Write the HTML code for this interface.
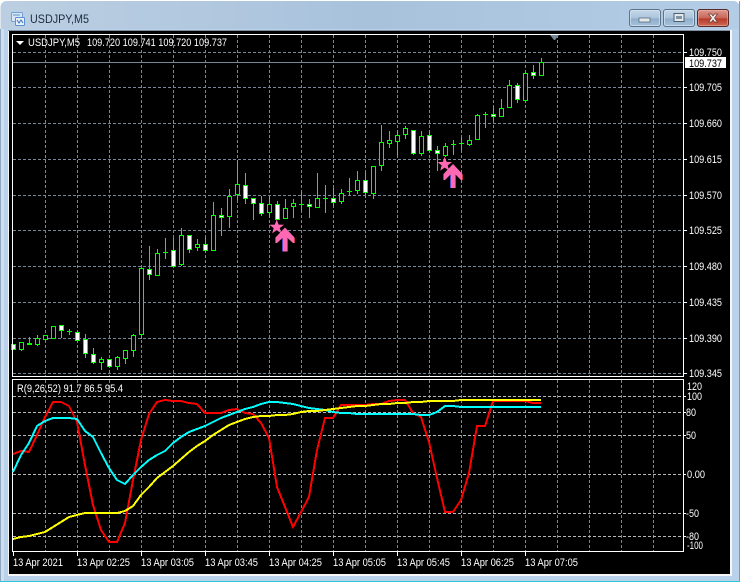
<!DOCTYPE html>
<html><head><meta charset="utf-8"><title>USDJPY,M5</title>
<style>
html,body{margin:0;padding:0;background:#fff;width:741px;height:582px;overflow:hidden}
svg{display:block;position:absolute;left:0;top:0}
text{font-family:"Liberation Sans",sans-serif;font-size:11px;fill:#fff}
</style></head><body>
<svg width="741" height="582" viewBox="0 0 741 582" xmlns="http://www.w3.org/2000/svg">
<defs>
<linearGradient id="tb" x1="0" y1="0" x2="1" y2="0"><stop offset="0" stop-color="#bccfe2"/><stop offset=".5" stop-color="#a8c2dc"/><stop offset="1" stop-color="#b4cde6"/></linearGradient>
<linearGradient id="b1" x1="0" y1="0" x2="0" y2="1"><stop offset="0" stop-color="#c6d8e9"/><stop offset=".5" stop-color="#abc4dc"/><stop offset=".55" stop-color="#8fadca"/><stop offset="1" stop-color="#a8c4de"/></linearGradient>
<linearGradient id="b2" x1="0" y1="0" x2="0" y2="1"><stop offset="0" stop-color="#dd9a8f"/><stop offset=".5" stop-color="#c9675a"/><stop offset=".55" stop-color="#b83a2a"/><stop offset="1" stop-color="#cf6c58"/></linearGradient>
</defs>
<!-- window frame -->
<rect x="0.5" y="1" width="739" height="581" rx="6" fill="url(#tb)"/>
<rect x="0" y="29" width="740" height="553" fill="#b9d1ea"/>
<rect x="0" y="581" width="740" height="1" fill="#2fc6dc"/>
<rect x="0" y="29" width="1" height="552" fill="#8ea6be"/>
<rect x="739" y="1" width="1" height="580" fill="#7f98b0"/>
<rect x="1" y="29" width="3" height="552" fill="#cfdfef"/>
<!-- client -->
<rect x="8" y="30" width="724" height="546" fill="#f4f6f8"/>
<rect x="8" y="30" width="722" height="1" fill="#7f8fa0"/>
<rect x="9" y="31" width="721" height="543" fill="#000"/>
<!-- title -->
<g>
<rect x="11.5" y="12.5" width="11" height="9" rx="1" fill="#d8e6f5" stroke="#6fa0d8"/>
<rect x="15.5" y="17.5" width="9" height="8" rx="1" fill="#e8f0fa" stroke="#5a90d0"/>
<path d="M13 15h7" stroke="#5a90d0" fill="none"/>
<path d="M17 20l2 3 2-3 2 3" stroke="#3a70b8" fill="none"/>
</g>
<text x="30" y="23" style="font-size:12px;fill:#1b2b3b" textLength="59" lengthAdjust="spacingAndGlyphs">USDJPY,M5</text>
<!-- buttons -->
<rect x="629.5" y="9.5" width="31" height="17" rx="2.5" fill="url(#b1)" stroke="#5d7389"/>
<rect x="630.5" y="10.5" width="29" height="15" rx="2" fill="none" stroke="#d7e4f0" stroke-opacity=".7"/>
<rect x="639" y="18" width="11" height="4" fill="#e6e9ec" stroke="#5a6a7a" stroke-width=".8"/>
<rect x="663.5" y="9.5" width="31" height="17" rx="2.5" fill="url(#b1)" stroke="#5d7389"/>
<rect x="664.5" y="10.5" width="29" height="15" rx="2" fill="none" stroke="#d7e4f0" stroke-opacity=".7"/>
<rect x="674" y="13.5" width="10" height="8" fill="#e6e9ec" stroke="#4f5f6f"/>
<rect x="676" y="16" width="6" height="3" fill="#7f93a8"/>
<rect x="697.5" y="9.5" width="31" height="17" rx="2.5" fill="url(#b2)" stroke="#5a2a2a"/>
<rect x="698.5" y="10.5" width="29" height="15" rx="2" fill="none" stroke="#eebbb0" stroke-opacity=".5"/>
<path d="M708.5 14l3 0 1.5 2 1.5-2 3 0-3 4 3 4-3 0-1.5-2-1.5 2-3 0 3-4z" fill="#f2f0ee" stroke="#6a3a36" stroke-width=".7"/>

<!-- main grid -->
<g stroke="#778899" stroke-dasharray="3 2" fill="none" shape-rendering="crispEdges">
<path d="M13 52.5H683M13 87.5H683M13 123.5H683M13 159.5H683M13 195.5H683M13 230.5H683M13 266.5H683M13 302.5H683M13 338.5H683M13 373.5H683"/>
<path d="M45.5 35V552M77.5 35V552M109.5 35V552M141.5 35V552M173.5 35V552M205.5 35V552M237.5 35V552M269.5 35V552M301.5 35V552M333.5 35V552M365.5 35V552M397.5 35V552M429.5 35V552M461.5 35V552M493.5 35V552M525.5 35V552M557.5 35V552M589.5 35V552M621.5 35V552M653.5 35V552"/>
</g>
<path d="M13 62.5H684" stroke="#778899" fill="none" shape-rendering="crispEdges"/>
<!-- sub grid -->
<g stroke="#b4b8bc" stroke-dasharray="3 2" fill="none" shape-rendering="crispEdges">
<path d="M13 396.5H683M13 412.5H683M13 435.5H683M13 474.5H683M13 513.5H683M13 536.5H683"/>
</g>
<!-- candles -->
<g fill="none" stroke="#00ff00" shape-rendering="crispEdges">
<path d="M21.5 342V351M29.5 337V344M37.5 335V346M53.5 326V339M61.5 326V338M69.5 329V335M77.5 331V341M85.5 334V358M93.5 348V364M101.5 357V370M109.5 359V368M117.5 356V370M125.5 350V364M133.5 334V357M141.5 268V339M149.5 246V280M157.5 249V275M165.5 238V259M173.5 238V266M181.5 228V266M189.5 235V253M197.5 239V251M205.5 237V253M213.5 202V251M221.5 208V236M229.5 189V228M237.5 160V200M245.5 173V204M253.5 198V220M261.5 196V216M269.5 196V217M277.5 201V220M285.5 199V219M293.5 199V218M301.5 192V211M309.5 199V218M317.5 173V208M325.5 185V213M333.5 188V207M341.5 189V204M349.5 178V196M357.5 171V194M365.5 172V198M373.5 166V199M381.5 125V171M389.5 131V148M397.5 130V156M405.5 126V139M413.5 130V155M421.5 131V156M429.5 130V152M437.5 146V171M445.5 143V157M453.5 140V155M461.5 137V151M469.5 135V146M477.5 114V140M485.5 112V128M493.5 106V121M501.5 99V117M509.5 80V108M517.5 83V103M525.5 72V103M533.5 65V79M541.5 58V76"/>
<path d="M67 331.5H72M163 252.5H168M299 204.5H304M323 198.5H328M347 191.5H352M451 144.5H456M459 143.5H464M483 114.5H488M27 343.5H32M27 344.5H32" />
<g fill="#000">
<rect x="19.5" y="342.5" width="4" height="7"/><rect x="35.5" y="338.5" width="4" height="6"/><rect x="43.5" y="335.5" width="4" height="4"/><rect x="51.5" y="326.5" width="4" height="12"/><rect x="99.5" y="359.5" width="4" height="3"/><rect x="115.5" y="357.5" width="4" height="9"/><rect x="123.5" y="350.5" width="4" height="8"/><rect x="131.5" y="335.5" width="4" height="15"/><rect x="139.5" y="268.5" width="4" height="66"/><rect x="155.5" y="253.5" width="4" height="22"/><rect x="179.5" y="235.5" width="4" height="29"/><rect x="195.5" y="244.5" width="4" height="3"/><rect x="211.5" y="215.5" width="4" height="35"/><rect x="227.5" y="196.5" width="4" height="20"/><rect x="235.5" y="184.5" width="4" height="10"/><rect x="267.5" y="204.5" width="4" height="8"/><rect x="283.5" y="208.5" width="4" height="10"/><rect x="291.5" y="203.5" width="4" height="3"/><rect x="315.5" y="198.5" width="4" height="9"/><rect x="339.5" y="193.5" width="4" height="8"/><rect x="355.5" y="180.5" width="4" height="10"/><rect x="371.5" y="166.5" width="4" height="27"/><rect x="379.5" y="142.5" width="4" height="23"/><rect x="387.5" y="140.5" width="4" height="3"/><rect x="395.5" y="135.5" width="4" height="6"/><rect x="403.5" y="128.5" width="4" height="6"/><rect x="419.5" y="136.5" width="4" height="17"/><rect x="443.5" y="146.5" width="4" height="9"/><rect x="467.5" y="140.5" width="4" height="4"/><rect x="475.5" y="115.5" width="4" height="24"/><rect x="499.5" y="108.5" width="4" height="8"/><rect x="507.5" y="85.5" width="4" height="22"/><rect x="523.5" y="73.5" width="4" height="27"/><rect x="539.5" y="62.5" width="4" height="13"/>
</g>
<g fill="#fff">
<rect x="11.5" y="344.5" width="4" height="5"/><rect x="59.5" y="325.5" width="4" height="5"/><rect x="75.5" y="332.5" width="4" height="8"/><rect x="83.5" y="339.5" width="4" height="14"/><rect x="91.5" y="354.5" width="4" height="8"/><rect x="107.5" y="359.5" width="4" height="7"/><rect x="147.5" y="269.5" width="4" height="5"/><rect x="171.5" y="250.5" width="4" height="16"/><rect x="187.5" y="235.5" width="4" height="14"/><rect x="203.5" y="244.5" width="4" height="6"/><rect x="219.5" y="215.5" width="4" height="2"/><rect x="243.5" y="185.5" width="4" height="13"/><rect x="251.5" y="198.5" width="4" height="5"/><rect x="259.5" y="203.5" width="4" height="10"/><rect x="275.5" y="204.5" width="4" height="15"/><rect x="307.5" y="204.5" width="4" height="2"/><rect x="331.5" y="198.5" width="4" height="4"/><rect x="363.5" y="180.5" width="4" height="12"/><rect x="411.5" y="130.5" width="4" height="23"/><rect x="427.5" y="135.5" width="4" height="15"/><rect x="435.5" y="150.5" width="4" height="3"/><rect x="491.5" y="114.5" width="4" height="2"/><rect x="515.5" y="85.5" width="4" height="14"/><rect x="531.5" y="72.5" width="4" height="3"/>
</g>
</g>
<!-- frame lines -->
<g fill="none" stroke="#fff" shape-rendering="crispEdges">
<rect x="12.5" y="34.5" width="671" height="342"/>
<rect x="12.5" y="379.5" width="671" height="172"/>
</g>
<rect x="13" y="377" width="671" height="2" fill="#000"/>
<polygon points="550,35 559,35 555,40 554,40" fill="#778899"/>
<!-- stars / arrows -->
<g fill="#ff69b4">
<polygon points="276.7,219.5 278.6,224.6 284,224.8 279.7,228.1 281.2,233.3 276.7,230.3 272.2,233.3 273.7,228.1 269.4,224.8 274.8,224.6"/>
<polygon points="444.7,156.8 446.6,161.9 452,162.1 447.7,165.4 449.2,170.6 444.7,167.6 440.2,170.6 441.7,165.4 437.4,162.1 442.8,161.9"/>
<polygon points="285,227.5 294.5,237.5 294.5,243 293,243 287.5,238 287.5,251.5 282.5,251.5 282.5,238 277,243 275.5,243 275.5,237.5"/>
<polygon points="453,164 462.5,174 462.5,180 461,180 455.5,174.5 455.5,188 450.5,188 450.5,174.5 445,180 443.5,180 443.5,174"/>
</g>
<g fill="none" shape-rendering="crispEdges">
<path d="M282.5 239V251.5M275.5 238V243M450.5 175V188M443.5 175V180" stroke="#5a4ac8"/>
<path d="M287.5 239V251.5M294.5 238V243M455.5 175V188M462.5 175V180" stroke="#c8343c"/>
</g>
<!-- top text -->
<polygon points="16,41 24,41 20,45" fill="#fff"/>
<text x="28" y="46" textLength="52" lengthAdjust="spacingAndGlyphs">USDJPY,M5</text>
<text x="87" y="46" textLength="140" lengthAdjust="spacingAndGlyphs">109.720 109.741 109.720 109.737</text>
<text x="17" y="392" textLength="106" lengthAdjust="spacingAndGlyphs">R(9,26,52) 91.7 86.5 95.4</text>
<!-- indicators -->
<g fill="none" stroke-width="2" shape-rendering="crispEdges">
<polyline stroke="#ff0000" points="13,454 21,451 29,452 37,435 45,417 53,402 61,402 69,406 77,422 85,465 93,505 101,530 109,542 117,542 125,523 133,480 141,440 149,414 157,402 165,400 173,401 181,401 189,403 197,404 205,413 213,413 221,413 229,410 237,409 245,413 253,414 261,423 269,438 277,487 285,507 293,527 301,512 309,497 317,450 325,418 333,418 341,405 349,405 357,405 365,405 373,404 381,404 389,401 397,400 405,400 413,413 421,417 429,442 437,478 445,512 453,512 461,500 469,473 477,426 485,426 493,401 501,401 509,401 517,401 525,401 533,403 541,403"/>
<polyline stroke="#00ffff" points="13,472 21,455 29,443 37,426 45,421 53,418 61,418 69,418 77,419 85,431 93,437 101,453 109,468 117,480 125,484 133,475 141,467 149,460 157,455 165,451 173,443 181,437 189,432 197,429 205,426 213,422 221,418 229,415 237,412 245,409 253,407 261,404 269,402 277,402 285,403 293,404 301,406 309,408 317,409 325,410 333,412 341,413 349,413 357,414 365,414 373,414 381,414 389,414 397,414 405,414 413,414 421,415 429,415 437,412 445,406 453,406 461,407 469,407 477,407 485,407 493,407 501,407 509,407 517,407 525,407 533,407 541,407"/>
<polyline stroke="#ffff00" points="13,539 21,537 29,536 37,534 45,532 53,527 61,522 69,517 77,515 85,513 93,513 101,513 109,513 117,513 125,511 133,506 141,495 149,487 157,478 165,472 173,466 181,459 189,452 197,446 205,441 213,435 221,430 229,425 237,422 245,419 253,417 261,416 269,416 277,415 285,415 293,414 301,412 309,411 317,411 325,410 333,409 341,408 349,407 357,406 365,406 373,405 381,404 389,404 397,403 405,403 413,402 421,402 429,401 437,401 445,401 453,401 461,400 469,400 477,400 485,400 493,400 501,400 509,400 517,400 525,400 533,400 541,400"/>
</g>
<!-- axis ticks -->
<g stroke="#fff" fill="none" shape-rendering="crispEdges">
<path d="M684 52.5H687M684 87.5H687M684 123.5H687M684 159.5H687M684 195.5H687M684 230.5H687M684 266.5H687M684 302.5H687M684 338.5H687M684 373.5H687"/>
<path d="M684 396.5H686M684 412.5H686M684 435.5H686M684 474.5H686M684 513.5H686M684 536.5H686"/>
<path d="M13.5 552V556M77.5 552V556M141.5 552V556M205.5 552V556M269.5 552V556M333.5 552V556M397.5 552V556M461.5 552V556M525.5 552V556"/>
</g>
<!-- price labels -->
<g>
<text x="689" y="56" textLength="33" lengthAdjust="spacingAndGlyphs">109.750</text>
<rect x="685" y="57" width="41" height="11" fill="#fff"/>
<text x="689" y="67" textLength="33" lengthAdjust="spacingAndGlyphs" style="fill:#000">109.737</text>
<text x="689" y="91" textLength="33" lengthAdjust="spacingAndGlyphs">109.705</text>
<text x="689" y="127" textLength="33" lengthAdjust="spacingAndGlyphs">109.660</text>
<text x="689" y="163" textLength="33" lengthAdjust="spacingAndGlyphs">109.615</text>
<text x="689" y="199" textLength="33" lengthAdjust="spacingAndGlyphs">109.570</text>
<text x="689" y="234" textLength="33" lengthAdjust="spacingAndGlyphs">109.525</text>
<text x="689" y="270" textLength="33" lengthAdjust="spacingAndGlyphs">109.480</text>
<text x="689" y="306" textLength="33" lengthAdjust="spacingAndGlyphs">109.435</text>
<text x="689" y="342" textLength="33" lengthAdjust="spacingAndGlyphs">109.390</text>
<text x="689" y="377" textLength="33" lengthAdjust="spacingAndGlyphs">109.345</text>
<text x="687" y="390" textLength="15" lengthAdjust="spacingAndGlyphs">120</text>
<text x="687" y="400" textLength="15" lengthAdjust="spacingAndGlyphs">100</text>
<text x="686" y="416" textLength="10" lengthAdjust="spacingAndGlyphs">80</text>
<text x="686" y="439" textLength="10" lengthAdjust="spacingAndGlyphs">50</text>
<text x="687" y="478" textLength="18" lengthAdjust="spacingAndGlyphs">0.00</text>
<text x="686" y="517" textLength="13" lengthAdjust="spacingAndGlyphs">-50</text>
<text x="686" y="540" textLength="13" lengthAdjust="spacingAndGlyphs">-80</text>
<text x="687" y="549" textLength="16" lengthAdjust="spacingAndGlyphs">-100</text>
</g>
<!-- time labels -->
<g>
<text x="13" y="566" textLength="50" lengthAdjust="spacingAndGlyphs">13 Apr 2021</text>
<text x="77" y="566" textLength="53" lengthAdjust="spacingAndGlyphs">13 Apr 02:25</text>
<text x="141" y="566" textLength="53" lengthAdjust="spacingAndGlyphs">13 Apr 03:05</text>
<text x="205" y="566" textLength="53" lengthAdjust="spacingAndGlyphs">13 Apr 03:45</text>
<text x="269" y="566" textLength="53" lengthAdjust="spacingAndGlyphs">13 Apr 04:25</text>
<text x="333" y="566" textLength="53" lengthAdjust="spacingAndGlyphs">13 Apr 05:05</text>
<text x="397" y="566" textLength="53" lengthAdjust="spacingAndGlyphs">13 Apr 05:45</text>
<text x="461" y="566" textLength="53" lengthAdjust="spacingAndGlyphs">13 Apr 06:25</text>
<text x="525" y="566" textLength="53" lengthAdjust="spacingAndGlyphs">13 Apr 07:05</text>
</g>
</svg>
</body></html>
